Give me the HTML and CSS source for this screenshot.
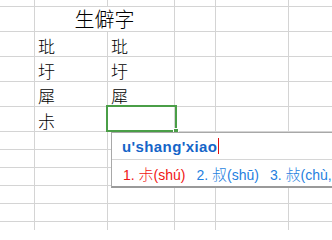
FILE: index.html
```html
<!DOCTYPE html>
<html>
<head>
<meta charset="utf-8">
<link rel="stylesheet" href="styles.css">
</head>
<body>
<div class="sheet">
  <div class="grid">
    <div class="c"></div><div class="c"></div><div class="c"></div><div class="c"></div><div class="c"></div><div class="c"></div>
    <div class="c"></div><div class="c head">生僻字</div><div class="c"></div><div class="c"></div><div class="c"></div>
    <div class="c"></div><div class="c ch">玭</div><div class="c ch">玭</div><div class="c"></div><div class="c"></div><div class="c"></div>
    <div class="c"></div><div class="c ch">圩</div><div class="c ch">圩</div><div class="c"></div><div class="c"></div><div class="c"></div>
    <div class="c"></div><div class="c ch">犀</div><div class="c ch">犀</div><div class="c"></div><div class="c"></div><div class="c"></div>
    <div class="c"></div><div class="c ch">尗</div><div class="c ch"></div><div class="c"></div><div class="c"></div><div class="c"></div>
    <div class="c"></div><div class="c"></div><div class="c"></div><div class="c"></div><div class="c"></div><div class="c"></div>
    <div class="c"></div><div class="c"></div><div class="c"></div><div class="c"></div><div class="c"></div><div class="c"></div>
    <div class="c"></div><div class="c"></div><div class="c"></div><div class="c"></div><div class="c"></div><div class="c"></div>
    <div class="c"></div><div class="c"></div><div class="c"></div><div class="c"></div><div class="c"></div><div class="c"></div>
    <div class="c"></div><div class="c"></div><div class="c"></div><div class="c"></div><div class="c"></div><div class="c"></div>
    <div class="c"></div><div class="c"></div><div class="c"></div><div class="c"></div><div class="c"></div><div class="c"></div>
  </div>
  <div class="selection"><span class="handle"></span></div>
  <div class="ime">
    <div class="ime-input">u'shang'xiao<span class="caret"></span></div>
    <div class="ime-cands">
      <span class="cand active">1.&nbsp;<span class="hz">尗</span>(shú)</span>
      <span class="cand">2.&nbsp;<span class="hz">叔</span>(shū)</span>
      <span class="cand">3.&nbsp;<span class="hz">敊</span>(chù,</span>
    </div>
  </div>
</div>
</body>
</html>
```

FILE: styles.css
```css
html, body {
  margin: 0;
  padding: 0;
  background: #ffffff;
  overflow: hidden;
}
.sheet {
  position: relative;
  width: 332px;
  height: 230px;
  overflow: hidden;
  font-family: "Noto Sans CJK SC", sans-serif;
}
.grid {
  display: grid;
  grid-template-columns: 34px 72px 66px 40px 72px 1fr;
  grid-template-rows: 6px 24px 24px 24px 24px 24px 17px 17px 17px 17px 17px 20px;
  gap: 1px;
  background: #d4d4d4;
  width: 332px;
  height: 242px;
}
.c {
  background: #ffffff;
  display: flex;
  align-items: flex-end;
}
.head {
  grid-column: span 2;
  justify-content: center;
  font-size: 20px;
  line-height: 24px;
  font-weight: 300;
  color: #000;
}
.ch {
  font-size: 17px;
  line-height: 21px;
  padding-left: 3px;
  font-weight: 300;
  color: #000;
}
.selection {
  position: absolute;
  left: 106px;
  top: 105px;
  width: 67px;
  height: 23px;
  border: 2px solid #4a9e47;
}
.handle {
  position: absolute;
  right: -4px;
  bottom: -4px;
  width: 4px;
  height: 4px;
  background: #4a9e47;
  border: 1px solid #ffffff;
}
.ime {
  position: absolute;
  left: 111px;
  top: 132px;
  width: 240px;
  height: 53px;
  background: #ffffff;
  border: 1px solid #a8a8a8;
  border-bottom: 2px solid #9a9a9a;
}
.ime-input {
  height: 26px;
  border-bottom: 1px solid #d6d6d6;
  display: flex;
  align-items: center;
  padding-left: 10px;
  font-family: "Liberation Sans", Arial, sans-serif;
  font-weight: bold;
  font-size: 15px;
  letter-spacing: 0.4px;
  color: #1565c8;
}
.caret {
  display: inline-block;
  width: 1px;
  height: 16px;
  background: #e01010;
  margin-left: 1px;
}
.ime-cands {
  height: 26px;
  display: flex;
  align-items: center;
  gap: 11px;
  padding-left: 11px;
  white-space: nowrap;
  font-family: "Liberation Sans", Arial, sans-serif;
  font-size: 14px;
  color: #1f7fe0;
}
.cand.active {
  color: #f01414;
}
.hz {
  font-family: "Noto Sans CJK SC", sans-serif;
  font-size: 15px;
  font-weight: 300;
}
```
